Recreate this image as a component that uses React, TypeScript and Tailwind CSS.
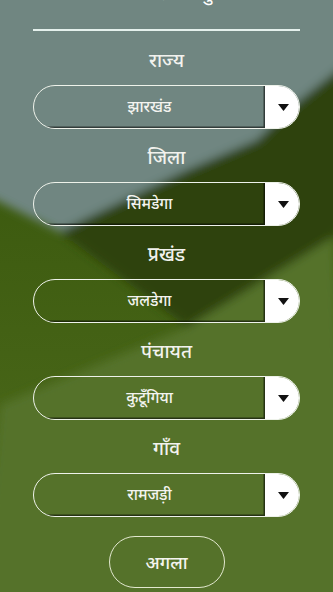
const fields = [
  { label: 'राज्य', value: 'झारखंड' },
  { label: 'जिला', value: 'सिमडेगा' },
  { label: 'प्रखंड', value: 'जलडेगा' },
  { label: 'पंचायत', value: 'कुटूँगिया' },
  { label: 'गाँव', value: 'रामजड़ी' },
]

function Background() {
  return (
    <svg className="absolute inset-0 h-full w-full" viewBox="0 0 333 592" preserveAspectRatio="none">
      <defs>
        <linearGradient id="base" x1="0" y1="0" x2="0" y2="1">
          <stop offset="0.3" stopColor="#3c5a0f" />
          <stop offset="1" stopColor="#4f6d1d" />
        </linearGradient>
        <filter id="soft" x="-10%" y="-10%" width="120%" height="120%">
          <feGaussianBlur stdDeviation="5" />
        </filter>
      </defs>
      <rect width="333" height="592" fill="url(#base)" />
      <g filter="url(#soft)">
        <polygon points="333,225 187,327 0,405 -20,620 353,620" fill="#55722a" />
        <polygon points="353,40 353,225 187,327 60,232 150,150" fill="#2d4310" />
        <polygon
          points="-20,-20 353,-20 353,58 290,108 257,140 187,170 83,220 60,232 -20,192"
          fill="#6f8681"
        />
      </g>
    </svg>
  )
}

function Dropdown({ value }: { value: string }) {
  return (
    <div className="flex h-[44px] w-full overflow-hidden rounded-full border-[1.5px] border-[#eef2ea]">
      <div className="flex flex-1 items-center justify-center shadow-[inset_-1.5px_-1.5px_0_rgba(0,0,0,0.55)]">
        <span className="text-[15.5px] font-medium text-[#f4f4f0]">{value}</span>
      </div>
      <div className="flex w-[34px] items-center justify-center bg-white pl-[2px]">
        <svg width="11" height="7" viewBox="0 0 11 7">
          <polygon points="0,0 11,0 5.5,7" fill="#111" />
        </svg>
      </div>
    </div>
  )
}

export default function App() {
  return (
    <div
      className="relative h-[592px] w-[333px] overflow-hidden"
      style={{ fontFamily: '"Noto Sans", "Noto Sans Devanagari", "Lohit Devanagari", sans-serif' }}
    >
      <Background />
      <div className="relative flex flex-col items-center px-[33px]">
        <div className="mt-[-20px] h-[26px] text-[20px] leading-[26px] text-white">
          अपना स्थान चुनें
        </div>
        <div className="mt-[23px] h-[2px] w-full bg-[#e4f0ec]" />
        <div className="mt-[17px] flex w-full flex-col gap-[16px]">
          {fields.map((f) => (
            <div key={f.label} className="flex flex-col items-center">
              <div className="mb-[13px] h-[24px] text-[19px] leading-[24px] font-medium text-[#f2f2ee]">
                {f.label}
              </div>
              <Dropdown value={f.value} />
            </div>
          ))}
        </div>
        <button className="mt-[19px] flex h-[52px] w-[116px] items-center justify-center rounded-full border-[1.5px] border-[#e2e8cf] text-[18px] font-medium text-[#f4f4ee]">
          अगला
        </button>
      </div>
    </div>
  )
}
